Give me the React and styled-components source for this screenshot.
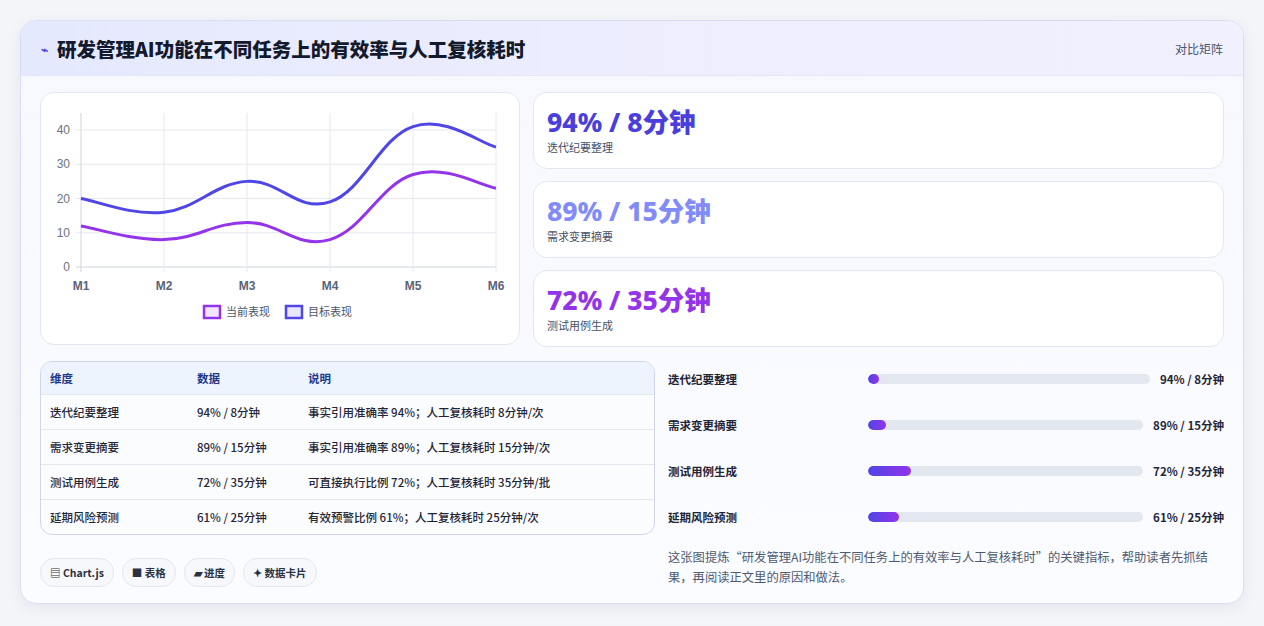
import React from "react";
import styled, { createGlobalStyle } from "styled-components";

const G = createGlobalStyle`
  body{margin:0;background:#f4f5f8;font-family:"Noto Sans CJK SC","Noto Sans",sans-serif;}
`;
const Page = styled.div`padding:20px 20px 22px 20px;`;
const Card = styled.div`
  background:linear-gradient(180deg,#f7f8ff,#fbfcff);border:1px solid #d9ddf3;border-radius:16px;overflow:hidden;
  box-shadow:0 4px 14px rgba(60,70,140,.08);
`;
const Header = styled.div`
  height:54px;display:flex;align-items:center;justify-content:space-between;padding:0 20px;
  background:linear-gradient(90deg,#e5e9fd,#eeeefe 60%,#f1f0fe);border-bottom:1px solid #e3e6f5;
`;
const Title = styled.div`font-size:19.5px;font-weight:800;color:#141a2e;display:flex;align-items:center;gap:9px;`;
const Icon = styled.span`color:#4f46e5;font-size:12px;`;
const Tag = styled.div`font-size:12px;color:#4b5569;`;
const Body = styled.div`padding:16px 19px 16px 19px;display:flex;flex-direction:column;gap:14px;`;
const Top = styled.div`display:grid;grid-template-columns:480px 1fr;gap:13px;`;
const ChartBox = styled.div`background:#fff;border:1px solid #e3e7f3;border-radius:14px;height:251px;`;
const Stats = styled.div`display:flex;flex-direction:column;gap:12px;`;
const Stat = styled.div`background:#fff;border:1px solid #e3e7f3;border-radius:14px;height:75px;padding:0 13px;display:flex;flex-direction:column;justify-content:center;`;
const Val = styled.div`font-size:26.5px;font-weight:800;color:${p=>p.c};line-height:32px;font-family:"Noto Sans","Noto Sans CJK SC",sans-serif;`;
const Lbl = styled.div`font-size:11px;color:#475066;margin-top:1px;`;
const Bottom = styled.div`display:grid;grid-template-columns:615px 1fr;gap:13px;`;
const Left = styled.div`display:flex;flex-direction:column;gap:23px;`;
const Table = styled.div`border:1px solid #cfd6ea;border-radius:12px;overflow:hidden;background:#fbfcfe;`;
const Row = styled.div`display:grid;grid-template-columns:147px 111px 1fr;height:${p=>p.h?32:34}px;align-items:center;padding-left:9px;font-size:11.5px;
  color:${p=>p.h?"#1e3a8a":"#1f2637"};font-weight:${p=>p.h?600:500};background:${p=>p.h?"#eef4fe":"transparent"};
  border-top:${p=>p.first?"none":"1px solid #e3e7f0"};`;
const Chips = styled.div`display:flex;gap:8px;`;
const Chip = styled.div`height:27px;padding:0 9px;border:1px solid #e2e6ef;border-radius:14px;background:#f7f8fc;display:flex;align-items:center;gap:3px;font-size:10.5px;font-weight:600;color:#2a3142;`;
const Right = styled.div`display:flex;flex-direction:column;margin-top:-5px;`;
const BarRow = styled.div`height:46px;display:flex;align-items:center;gap:10px;font-size:11.5px;font-weight:600;color:#1f2637;`;
const BarLabel = styled.div`width:190px;`;
const Track = styled.div`flex:1;height:10px;background:#e3e7ef;border-radius:5px;overflow:hidden;`;
const Fill = styled.div`height:100%;border-radius:5px;background:linear-gradient(90deg,#4f46e5,#9333ea);`;
const BarVal = styled.div`font-weight:700;font-size:11.5px;color:#1f2637;`;
const Desc = styled.div`font-size:12.3px;color:#4f5a70;line-height:20px;margin-top:7px;padding-right:4px;`;

function path(data){
  const xs=[40,123,206,289,372,455];
  const pts=data.map((v,i)=>[xs[i],176-v*3.425]);
  let d=`M${pts[0][0]},${pts[0][1]}`;
  for(let i=0;i<pts.length-1;i++){
    const p0=pts[i-1]||pts[i],p1=pts[i],p2=pts[i+1],p3=pts[i+2]||p2;
    const t=0.2;
    const c1=[p1[0]+(p2[0]-p0[0])*t,p1[1]+(p2[1]-p0[1])*t];
    const c2=[p2[0]-(p3[0]-p1[0])*t,p2[1]-(p3[1]-p1[1])*t];
    d+=` C${c1[0]},${c1[1]} ${c2[0]},${c2[1]} ${p2[0]},${p2[1]}`;
  }
  return d;
}
function Chart(){
  const xs=[40,123,206,289,372,455];
  return (
    <svg width="480" height="251" viewBox="0 0 480 251">
      <g transform="translate(0,-2)">
        {[0,10,20,30,40].map(v=>{const y=176-v*3.425;return <g key={v}>
          <line x1="35" x2="455" y1={y} y2={y} stroke={v===0?"#cfd4de":"#e5e8ef"}/>
          <text x="29" y={y+4} fontSize="12" fill="#6b7280" textAnchor="end" fontFamily="Liberation Sans,sans-serif">{v}</text></g>})}
        {xs.map((x,i)=><g key={i}><line x1={x} x2={x} y1="22" y2="181" stroke={i===0?"#cfd4de":"#e5e8ef"}/>
          <text x={x} y="199" fontSize="12" fontWeight="700" fill="#5b6477" textAnchor="middle" fontFamily="Liberation Sans,sans-serif">M{i+1}</text></g>)}
        <path d={path([20,16,25,19,41,35])} fill="none" stroke="#4f46e5" strokeWidth="3"/>
        <path d={path([12,8,13,8,27,23])} fill="none" stroke="#9333ea" strokeWidth="3"/>
        <rect x="163" y="215" width="16" height="12" fill="#f3e4fd" stroke="#9333ea" strokeWidth="2.5"/>
        <text x="185" y="225" fontSize="11" fill="#4b5569" fontFamily="Noto Sans CJK SC,sans-serif">当前表现</text>
        <rect x="245" y="215" width="16" height="12" fill="#e7e6fc" stroke="#4f46e5" strokeWidth="2.5"/>
        <text x="267" y="225" fontSize="11" fill="#4b5569" fontFamily="Noto Sans CJK SC,sans-serif">目标表现</text>
      </g>
    </svg>
  );
}

const rows=[
  ["迭代纪要整理","94% / 8分钟","事实引用准确率 94%；人工复核耗时 8分钟/次",4],
  ["需求变更摘要","89% / 15分钟","事实引用准确率 89%；人工复核耗时 15分钟/次",6.5],
  ["测试用例生成","72% / 35分钟","可直接执行比例 72%；人工复核耗时 35分钟/批",15.5],
  ["延期风险预测","61% / 25分钟","有效预警比例 61%；人工复核耗时 25分钟/次",11.3],
];

export default function App(){
  return (<Page><G/>
    <Card>
      <Header><Title><Icon>⌁</Icon>研发管理AI功能在不同任务上的有效率与人工复核耗时</Title><Tag>对比矩阵</Tag></Header>
      <Body>
        <Top>
          <ChartBox><Chart/></ChartBox>
          <Stats>
            <Stat><Val c="#4a3fdc">94% / 8分钟</Val><Lbl>迭代纪要整理</Lbl></Stat>
            <Stat><Val c="#818cf8">89% / 15分钟</Val><Lbl>需求变更摘要</Lbl></Stat>
            <Stat><Val c="#9333ea">72% / 35分钟</Val><Lbl>测试用例生成</Lbl></Stat>
          </Stats>
        </Top>
        <Bottom>
          <Left>
            <Table>
              <Row h first><span>维度</span><span>数据</span><span>说明</span></Row>
              {rows.map(r=><Row key={r[0]}><span>{r[0]}</span><span>{r[1]}</span><span>{r[2]}</span></Row>)}
            </Table>
            <Chips><Chip>▤ Chart.js</Chip><Chip>■ 表格</Chip><Chip>▰ 进度</Chip><Chip>✦ 数据卡片</Chip></Chips>
          </Left>
          <Right>
            {rows.map(r=><BarRow key={r[0]}><BarLabel>{r[0]}</BarLabel><Track><Fill style={{width:r[3]+"%"}}/></Track><BarVal>{r[1]}</BarVal></BarRow>)}
            <Desc>这张图提炼“研发管理AI功能在不同任务上的有效率与人工复核耗时”的关键指标，帮助读者先抓结果，再阅读正文里的原因和做法。</Desc>
          </Right>
        </Bottom>
      </Body>
    </Card>
  </Page>);
}
